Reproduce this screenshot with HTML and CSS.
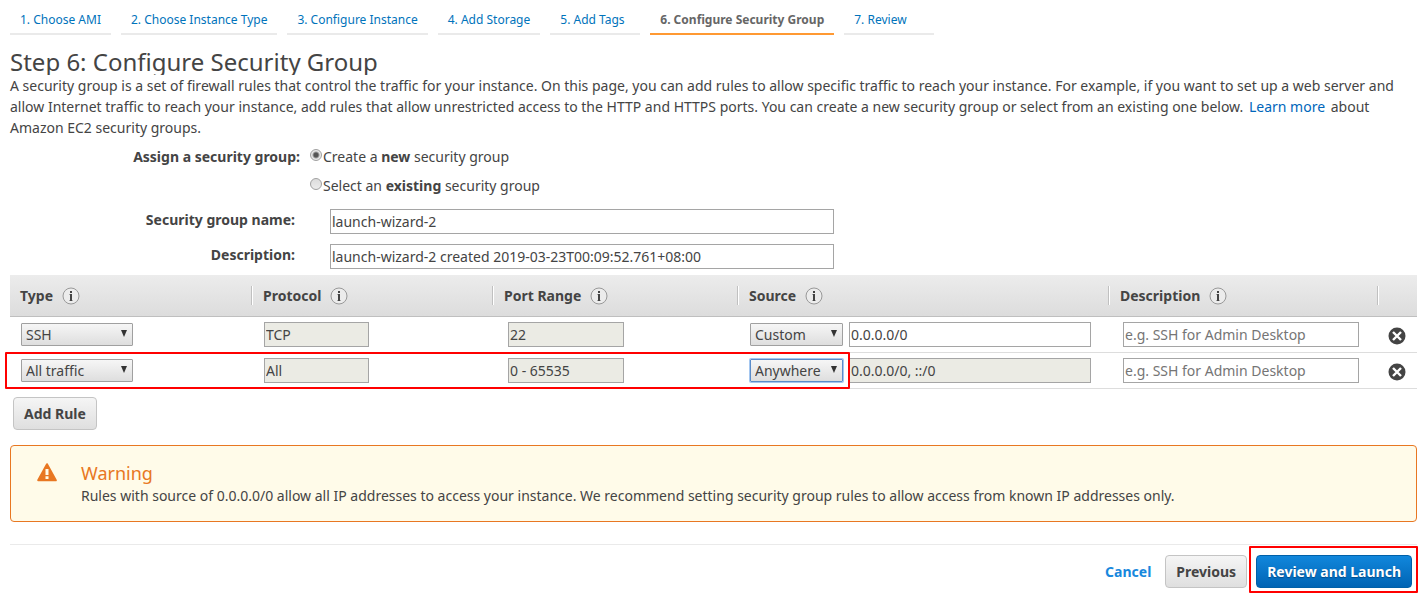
FILE: index.html
```html
<!DOCTYPE html>
<html lang="en">
<head>
<meta charset="utf-8">
<title>Step 6: Configure Security Group</title>
<link rel="stylesheet" href="styles.css">
</head>
<body>
<svg class="sprite" aria-hidden="true">
  <symbol id="info" viewBox="0 0 18 18">
    <circle cx="9" cy="9" r="8" fill="#ececec" stroke="#999" stroke-width="1"/>
    <path d="M8 4h2v2H8zM8 7h2v7H8z" fill="#444"/>
    <path d="M7 7h1v1H7zM7 13h1v1H7zM10 13h1v1h-1z" fill="#aaa"/>
  </symbol>
  <symbol id="remove" viewBox="0 0 18 18">
    <circle cx="9" cy="9" r="8.5" fill="#444"/>
    <path d="M5 5l8 8M13 5l-8 8" stroke="#fff" stroke-width="2.4"/>
  </symbol>
</svg>

<nav class="steps">
  <a class="step" href="#">1. Choose AMI</a>
  <a class="step" href="#">2. Choose Instance Type</a>
  <a class="step" href="#">3. Configure Instance</a>
  <a class="step" href="#">4. Add Storage</a>
  <a class="step" href="#">5. Add Tags</a>
  <a class="step step-current" href="#" aria-current="step">6. Configure Security Group</a>
  <a class="step" href="#">7. Review</a>
</nav>

<main class="content">
  <h1 class="title">Step 6: Configure Security Group</h1>
  <p class="intro">A security group is a set of firewall rules that control the traffic for your instance. On this page, you can add rules to allow specific traffic to reach your instance. For example, if you want to set up a web server and allow Internet traffic to reach your instance, add rules that allow unrestricted access to the HTTP and HTTPS ports. You can create a new security group or select from an existing one below. <a class="learn" href="#">Learn more</a> about Amazon EC2 security groups.</p>

  <form class="group-form">
    <div class="form-row assign" role="radiogroup" aria-labelledby="assign-label">
      <span class="form-label" id="assign-label">Assign a security group:</span>
      <div class="choices">
        <label class="choice"><input class="radio" type="radio" name="assign" checked><span>Create a <b>new</b> security group</span></label>
        <label class="choice"><input class="radio" type="radio" name="assign"><span>Select an <b>existing</b> security group</span></label>
      </div>
    </div>
    <div class="form-row field-row">
      <label class="form-label" for="group-name">Security group name:</label>
      <input class="text-input group-input" id="group-name" type="text" value="launch-wizard-2">
    </div>
    <div class="form-row field-row">
      <label class="form-label" for="group-desc">Description:</label>
      <input class="text-input group-input" id="group-desc" type="text" value="launch-wizard-2 created 2019-03-23T00:09:52.761+08:00">
    </div>
  </form>

  <table class="rules">
    <colgroup>
      <col class="col-type"><col class="col-protocol"><col class="col-port"><col class="col-source"><col class="col-desc"><col class="col-remove">
    </colgroup>
    <thead>
      <tr>
        <th><div class="head">Type <svg class="info"><use href="#info"/></svg></div></th>
        <th><div class="head">Protocol <svg class="info"><use href="#info"/></svg></div></th>
        <th><div class="head">Port Range <svg class="info"><use href="#info"/></svg></div></th>
        <th><div class="head">Source <svg class="info"><use href="#info"/></svg></div></th>
        <th><div class="head">Description <svg class="info"><use href="#info"/></svg></div></th>
        <th><div class="head head-last"></div></th>
      </tr>
    </thead>
    <tbody>
      <tr>
        <td><span class="select-box type-box"><select class="select" aria-label="Type"><option>SSH</option></select></span></td>
        <td><input class="text-input protocol-input" type="text" aria-label="Protocol" value="TCP" disabled></td>
        <td class="port-cell"><input class="text-input port-input" type="text" aria-label="Port range" value="22" disabled></td>
        <td><div class="source"><span class="select-box source-box"><select class="select" aria-label="Source"><option>Custom</option></select></span><input class="text-input source-input" type="text" aria-label="Source address" value="0.0.0.0/0"></div></td>
        <td class="desc-cell"><input class="text-input desc-input" type="text" aria-label="Description" placeholder="e.g. SSH for Admin Desktop"></td>
        <td><button class="remove" type="button" aria-label="Remove rule"><svg class="remove-icon"><use href="#remove"/></svg></button></td>
      </tr>
      <tr class="marked-row">
        <td><span class="select-box type-box"><select class="select" aria-label="Type"><option>All traffic</option></select></span><span class="mark row-mark"></span></td>
        <td><input class="text-input protocol-input" type="text" aria-label="Protocol" value="All" disabled></td>
        <td class="port-cell"><input class="text-input port-input" type="text" aria-label="Port range" value="0 - 65535" disabled></td>
        <td><div class="source"><span class="select-box source-box"><select class="select select-focus" aria-label="Source"><option>Anywhere</option></select></span><input class="text-input source-input" type="text" aria-label="Source address" value="0.0.0.0/0, ::/0" disabled></div></td>
        <td class="desc-cell"><input class="text-input desc-input" type="text" aria-label="Description" placeholder="e.g. SSH for Admin Desktop"></td>
        <td><button class="remove" type="button" aria-label="Remove rule"><svg class="remove-icon"><use href="#remove"/></svg></button></td>
      </tr>
    </tbody>
  </table>

  <button class="button add-rule" type="button">Add Rule</button>

  <section class="warning">
    <svg class="warning-icon" viewBox="0 0 20 19" aria-hidden="true">
      <path d="M10 1.2L18.8 17.3H1.2z" fill="#e87722" stroke="#e87722" stroke-width="2" stroke-linejoin="round"/>
      <path d="M8.5 6h3v6h-3zM8.5 13.2h3V16h-3z" fill="#fffbe9"/>
    </svg>
    <div>
      <h2 class="warning-title">Warning</h2>
      <p class="warning-text">Rules with source of 0.0.0.0/0 allow all IP addresses to access your instance. We recommend setting security group rules to allow access from known IP addresses only.</p>
    </div>
  </section>

  <footer class="actions">
    <a class="cancel" href="#">Cancel</a>
    <button class="button" type="button">Previous</button>
    <div class="launch">
      <button class="button button-primary" type="button">Review and Launch</button>
      <span class="mark launch-mark"></span>
    </div>
  </footer>
</main>
</body>
</html>
```
FILE: styles.css
```css
* {
  box-sizing: border-box;
}

body {
  margin: 0;
  padding: 9px 10px 0;
  background: #fff;
  color: #444;
  font: 14px/21px "Noto Sans", sans-serif;
}

input,
select,
button {
  margin: 0;
  color: #444;
  font: inherit;
}

.sprite {
  position: absolute;
  width: 0;
  height: 0;
}

.steps {
  display: flex;
  gap: 10px;
  font-size: 12px;
}

.step {
  min-width: 90px;
  height: 26px;
  padding: 0 10px;
  border-bottom: 2px solid #eaeaea;
  color: #0073bb;
  text-decoration: none;
  white-space: nowrap;
}

.step-current {
  border-color: #ff9933;
  color: #666;
  font-weight: bold;
}

.title {
  height: 25px;
  margin: 15px 0 0;
  overflow: hidden;
  font-size: 24px;
  font-weight: normal;
  line-height: 23px;
}

.intro {
  margin: 0;
}

.learn {
  margin: 0 2px;
  color: #0066bb;
  text-decoration: none;
}

.group-form {
  padding-top: 8px;
}

.form-row {
  display: flex;
}

.form-label {
  width: 290px;
  text-align: right;
  font-weight: bold;
}

.choices {
  display: flex;
  flex-direction: column;
  gap: 8px;
  padding-left: 10px;
}

.choice {
  display: flex;
}

.radio {
  appearance: none;
  width: 12px;
  height: 12px;
  margin: 3px 1px 0 0;
  border: 1px solid #a0a0a0;
  border-radius: 50%;
  background: linear-gradient(#dcdcdc, #ececec);
}

.radio:checked {
  background: radial-gradient(circle, #555 0 2px, #e8e8e8 4px);
}

.field-row {
  gap: 35px;
  margin-top: 10px;
  padding-left: 5px;
}

.assign + .field-row {
  margin-top: 13px;
}

.field-row .form-label {
  width: 280px;
}

.text-input {
  height: 25px;
  padding: 0 1px;
  border: 1px solid #a5a5a5;
  border-radius: 0;
  background: #fff;
}

.text-input:disabled {
  background: #ebebe4;
}

.text-input::placeholder {
  color: #757575;
}

.group-input {
  width: 504px;
}

.rules {
  width: 100%;
  margin-top: 6px;
  border-collapse: separate;
  border-spacing: 0;
  table-layout: fixed;
}

.col-type { width: 17.2%; }
.col-protocol { width: 17.13%; }
.col-port { width: 17.41%; }
.col-source { width: 26.37%; }
.col-desc { width: 19.12%; }

.rules thead tr {
  background: linear-gradient(#ececec, #dcdcdc);
}

.rules th {
  height: 42px;
  padding: 0;
  border-bottom: 1px solid #bfbfbf;
  text-align: left;
}

.head {
  display: flex;
  align-items: center;
  gap: 9px;
  height: 19px;
  padding-left: 11px;
  border-right: 1px solid #c0c0c0;
  box-shadow: 1px 0 #fff;
}

th:first-child .head {
  padding-left: 10px;
}

.head-last {
  border: 0;
  box-shadow: none;
}

.info {
  width: 18px;
  height: 18px;
}

.rules td {
  height: 36px;
  padding: 0 0 0 12px;
  border-bottom: 1px solid #ddd;
  vertical-align: middle;
}

.rules td:first-child {
  padding-left: 11px;
}

.rules td:last-child {
  padding-left: 10px;
}

.rules .port-cell {
  padding-left: 15px;
}

.rules .desc-cell {
  padding-left: 14px;
}

.rules .text-input {
  display: block;
}

.select-box {
  display: block;
  position: relative;
}

.select-box::after {
  position: absolute;
  top: 7px;
  right: 6px;
  width: 6px;
  height: 7px;
  background: #333;
  clip-path: polygon(0 0, 100% 0, 50% 100%);
  content: "";
  pointer-events: none;
}

.select {
  display: block;
  appearance: none;
  width: 100%;
  height: 23px;
  padding: 0 4px;
  border: 1px solid #a0a0a0;
  border-radius: 1px;
  background: linear-gradient(#f6f6f6, #dedede);
  line-height: 21px;
}

.select-focus {
  border-color: #5b8cc9;
  box-shadow: 0 0 0 1px #a5c7f0;
}

.type-box {
  width: 112px;
}

.source-box {
  width: 93px;
}

.protocol-input {
  width: 105px;
}

.port-input {
  width: 116px;
}

.source {
  display: flex;
  align-items: center;
  gap: 6px;
  padding-right: 18px;
}

.source-input {
  flex: 1;
  min-width: 0;
}

.desc-input {
  width: 236px;
}

.remove {
  display: block;
  margin-top: 3px;
  padding: 0;
  border: 0;
  background: none;
}

.remove-icon {
  display: block;
  width: 18px;
  height: 18px;
}

.mark {
  position: absolute;
  border: 2px solid #f00;
  border-radius: 1px;
  pointer-events: none;
}

.marked-row {
  position: relative;
}

.row-mark {
  top: -1px;
  bottom: 0;
  left: -5px;
  width: 60.06%;
}

.button {
  display: block;
  height: 33px;
  padding: 0 10px;
  border: 1px solid #c4c4c4;
  border-radius: 4px;
  background: linear-gradient(#f5f5f5, #dfdfdf);
  font-weight: bold;
}

.add-rule {
  margin: 8px 3px 0;
}

.warning {
  display: flex;
  gap: 24px;
  margin-top: 15px;
  padding: 17px 26px 15px;
  border: 1px solid #e87722;
  border-radius: 4px;
  background: #fffbe9;
}

.warning-icon {
  flex: none;
  width: 20px;
  height: 19px;
}

.warning-title {
  margin: 0;
  padding-bottom: 2px;
  color: #e87722;
  font-size: 18px;
  font-weight: normal;
  line-height: 20px;
}

.warning-text {
  margin: 0;
}

.actions {
  display: flex;
  align-items: center;
  justify-content: flex-end;
  margin-top: 22px;
  padding: 10px 5px 9px 0;
  border-top: 1px solid #eaeaea;
}

.cancel {
  margin-right: 14px;
  color: #1788dd;
  font-weight: bold;
  text-decoration: none;
}

.launch {
  position: relative;
  margin-left: 9px;
}

.launch-mark {
  top: -9px;
  right: -6px;
  bottom: -5px;
  left: -7px;
}

.button-primary {
  border-color: #0060a8;
  background: linear-gradient(#1187dc, #0064b4);
  color: #fff;
  text-shadow: 0 1px 1px #004a88;
}
```
